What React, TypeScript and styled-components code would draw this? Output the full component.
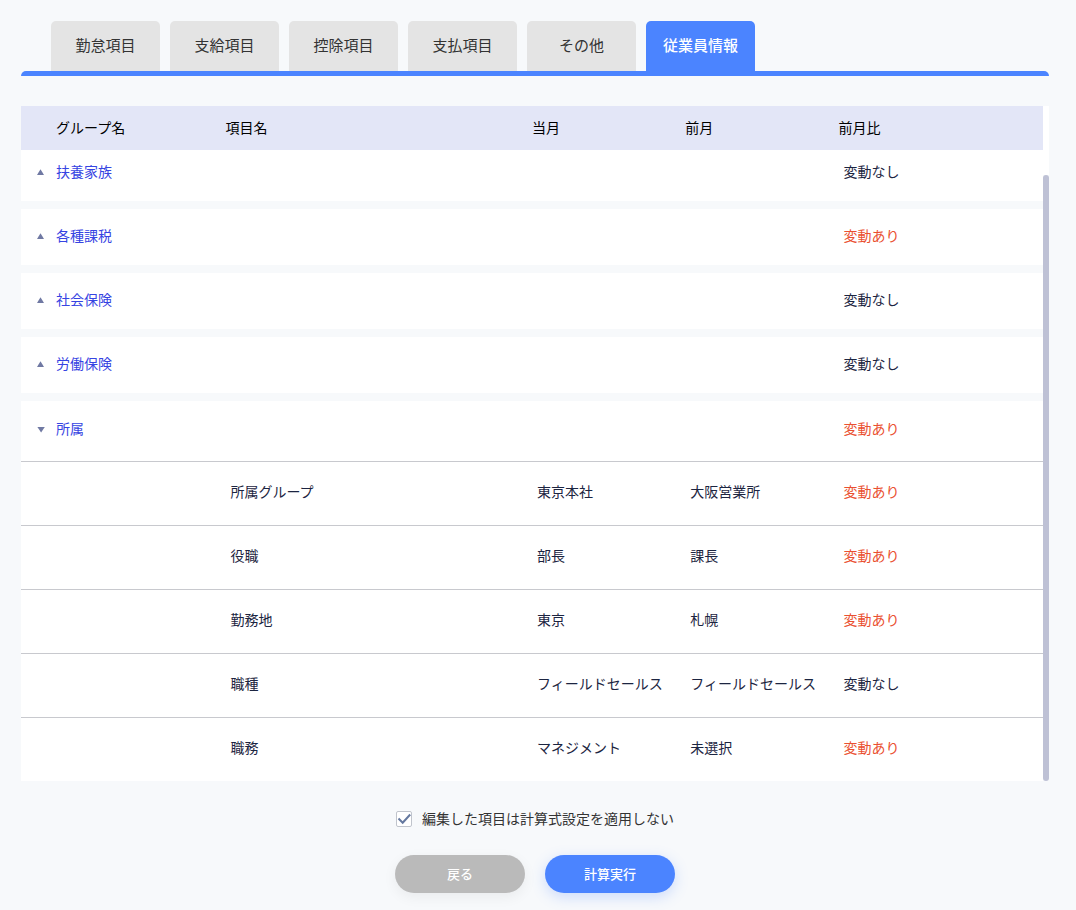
import React, { useState } from "react";
import styled, { createGlobalStyle, css } from "styled-components";

const GlobalStyle = createGlobalStyle`
  * { box-sizing: border-box; }
  body {
    margin: 0;
    background: #f7f9fb;
    color: #1c2541;
    font-family: "Noto Sans CJK JP", sans-serif;
    font-size: 14px;
    font-kerning: normal;
    line-height: 20px;
  }
  button, input { font-family: inherit; }
`;

const Page = styled.main`
  padding: 21px 27px 17px 21px;
`;

const TabBar = styled.nav`
  display: flex;
  gap: 10px;
  padding: 0 30px;
`;

const Tab = styled.button<{ $active: boolean }>`
  width: 109px;
  height: 50px;
  padding: 0 0 2px;
  border: 0;
  border-radius: 5px 5px 0 0;
  background: ${(p) => (p.$active ? "#4b84ff" : "#e4e4e4")};
  color: ${(p) => (p.$active ? "#fff" : "#333")};
  font-size: 15px;
  font-weight: ${(p) => (p.$active ? 500 : 400)};
  line-height: 20px;
  cursor: pointer;
`;

const TabLine = styled.div`
  height: 5px;
  border-radius: 5px 5px 0 0;
  background: #4b84ff;
`;

const TablePanel = styled.section`
  display: flex;
  margin-top: 30px;
  background: #fff;
`;

const Table = styled.table`
  flex: 1;
  table-layout: fixed;
  border-collapse: separate;
  border-spacing: 0;
`;

const HeadCell = styled.th<{ $width: string; $indent?: boolean }>`
  width: ${(p) => p.$width};
  height: 44px;
  padding: 0 0 2px ${(p) => (p.$indent ? "35px" : "0")};
  background: #e3e6f7;
  color: #000;
  font-weight: 400;
  text-align: left;
`;

type RowKind = "clipped" | "closed" | "open" | "item" | "lastItem";

const line = css`
  border-bottom: 1px solid #c8c9ce;
`;
const gap = css`
  border-bottom: 8px solid #f7f9fb;
`;

const rowStyles = {
  clipped: css`
    padding-top: 11px;
    padding-bottom: 20px;
    ${gap}
  `,
  closed: css`
    padding-top: 16px;
    padding-bottom: 20px;
    ${gap}
  `,
  open: css`
    padding-top: 17px;
    padding-bottom: 23px;
    ${line}
  `,
  item: css`
    padding-top: 19px;
    padding-bottom: 24px;
    ${line}
  `,
  lastItem: css`
    padding-top: 19px;
    padding-bottom: 24px;
  `,
};

const Row = styled.tr<{ $kind: RowKind }>`
  & > td {
    padding-left: 5px;
    padding-right: 0;
    white-space: nowrap;
    ${(p) => rowStyles[p.$kind]}
  }
`;

const GroupToggle = styled.button`
  display: flex;
  align-items: center;
  gap: 11px;
  margin: 0;
  padding: 0 0 0 10px;
  border: 0;
  background: none;
  color: #3644e2;
  font-size: 14px;
  line-height: 20px;
  cursor: pointer;
`;

const Arrow = styled.svg`
  width: 9px;
  height: 10px;
  fill: #7079a3;
`;

const Change = styled.span<{ $changed: boolean }>`
  color: ${(p) => (p.$changed ? "#ea5030" : "inherit")};
`;

const ScrollTrack = styled.div`
  display: flex;
  width: 6px;
  padding-top: 69px;
  background: linear-gradient(#fff 69px, #f7f9fb 69px);
`;

const ScrollThumb = styled.div`
  flex: 1;
  border-radius: 3px;
  background: #bec1d5;
`;

const Option = styled.label`
  display: flex;
  justify-content: center;
  align-items: center;
  gap: 10px;
  margin-top: 27px;
  color: #333;
`;

const OptionText = styled.span`
  padding-bottom: 2px;
`;

const CheckWrap = styled.span`
  display: grid;
  width: 16px;
  height: 16px;
  & > * { grid-area: 1 / 1; }
`;

const Checkbox = styled.input`
  appearance: none;
  width: 16px;
  height: 16px;
  margin: 0;
  border: 1px solid #c0c4cc;
  border-radius: 2px;
  background: #fff;
  & + svg { visibility: hidden; }
  &:checked + svg { visibility: visible; }
`;

const CheckMark = styled.svg`
  width: 16px;
  height: 16px;
  fill: none;
  stroke: #64789f;
  stroke-width: 2;
  pointer-events: none;
`;

const Actions = styled.div`
  display: flex;
  justify-content: center;
  gap: 20px;
  margin-top: 25px;
`;

const ActionButton = styled.button<{ $primary?: boolean }>`
  width: 130px;
  height: 38px;
  padding: 0;
  border: 0;
  border-radius: 19px;
  background: ${(p) => (p.$primary ? "#4b84ff" : "#bababa")};
  box-shadow: 0 4px 14px ${(p) => (p.$primary ? "rgba(75, 132, 255, 0.25)" : "rgba(0, 0, 0, 0.06)")};
  color: #fff;
  font-size: 13px;
  font-weight: 500;
  line-height: 20px;
  cursor: pointer;
`;

const tabs = ["勤怠項目", "支給項目", "控除項目", "支払項目", "その他", "従業員情報"];

const groups = [
  { name: "扶養家族", changed: false },
  { name: "各種課税", changed: true },
  { name: "社会保険", changed: false },
  { name: "労働保険", changed: false },
];

const items = [
  { name: "所属グループ", current: "東京本社", previous: "大阪営業所", changed: true },
  { name: "役職", current: "部長", previous: "課長", changed: true },
  { name: "勤務地", current: "東京", previous: "札幌", changed: true },
  { name: "職種", current: "フィールドセールス", previous: "フィールドセールス", changed: false },
  { name: "職務", current: "マネジメント", previous: "未選択", changed: true },
];

function ChangeLabel({ changed }: { changed: boolean }) {
  return <Change $changed={changed}>{changed ? "変動あり" : "変動なし"}</Change>;
}

function GroupRow({ name, changed, kind }: { name: string; changed: boolean; kind: RowKind }) {
  const open = kind === "open";
  return (
    <Row $kind={kind}>
      <td>
        <GroupToggle type="button" aria-expanded={open}>
          <Arrow viewBox="0 0 9 10" aria-hidden="true">
            <path d={open ? "M1.4 4h7.4L5.1 9.6z" : "M1 9h7L4.5 3.2z"} />
          </Arrow>
          {name}
        </GroupToggle>
      </td>
      <td />
      <td />
      <td />
      <td>
        <ChangeLabel changed={changed} />
      </td>
    </Row>
  );
}

export default function App() {
  const [active, setActive] = useState("従業員情報");
  const [skipFormula, setSkipFormula] = useState(true);

  return (
    <>
      <GlobalStyle />
      <Page>
        <TabBar>
          {tabs.map((tab) => (
            <Tab key={tab} type="button" $active={tab === active} onClick={() => setActive(tab)}>
              {tab}
            </Tab>
          ))}
        </TabBar>
        <TabLine />
        <TablePanel>
          <Table>
            <thead>
              <tr>
                <HeadCell $width="20%" $indent>グループ名</HeadCell>
                <HeadCell $width="30%">項目名</HeadCell>
                <HeadCell $width="15%">当月</HeadCell>
                <HeadCell $width="15%">前月</HeadCell>
                <HeadCell $width="20%">前月比</HeadCell>
              </tr>
            </thead>
            <tbody>
              {groups.map((group, i) => (
                <GroupRow key={group.name} {...group} kind={i === 0 ? "clipped" : "closed"} />
              ))}
              <GroupRow name="所属" changed kind="open" />
              {items.map((item, i) => (
                <Row key={item.name} $kind={i === items.length - 1 ? "lastItem" : "item"}>
                  <td />
                  <td>{item.name}</td>
                  <td>{item.current}</td>
                  <td>{item.previous}</td>
                  <td>
                    <ChangeLabel changed={item.changed} />
                  </td>
                </Row>
              ))}
            </tbody>
          </Table>
          <ScrollTrack>
            <ScrollThumb />
          </ScrollTrack>
        </TablePanel>
        <Option>
          <CheckWrap>
            <Checkbox
              type="checkbox"
              checked={skipFormula}
              onChange={(e) => setSkipFormula(e.target.checked)}
            />
            <CheckMark viewBox="0 0 16 16" aria-hidden="true">
              <path d="M2.5 7.5l4.2 4.2L14.2 3.5" />
            </CheckMark>
          </CheckWrap>
          <OptionText>編集した項目は計算式設定を適用しない</OptionText>
        </Option>
        <Actions>
          <ActionButton type="button">戻る</ActionButton>
          <ActionButton type="button" $primary>計算実行</ActionButton>
        </Actions>
      </Page>
    </>
  );
}
